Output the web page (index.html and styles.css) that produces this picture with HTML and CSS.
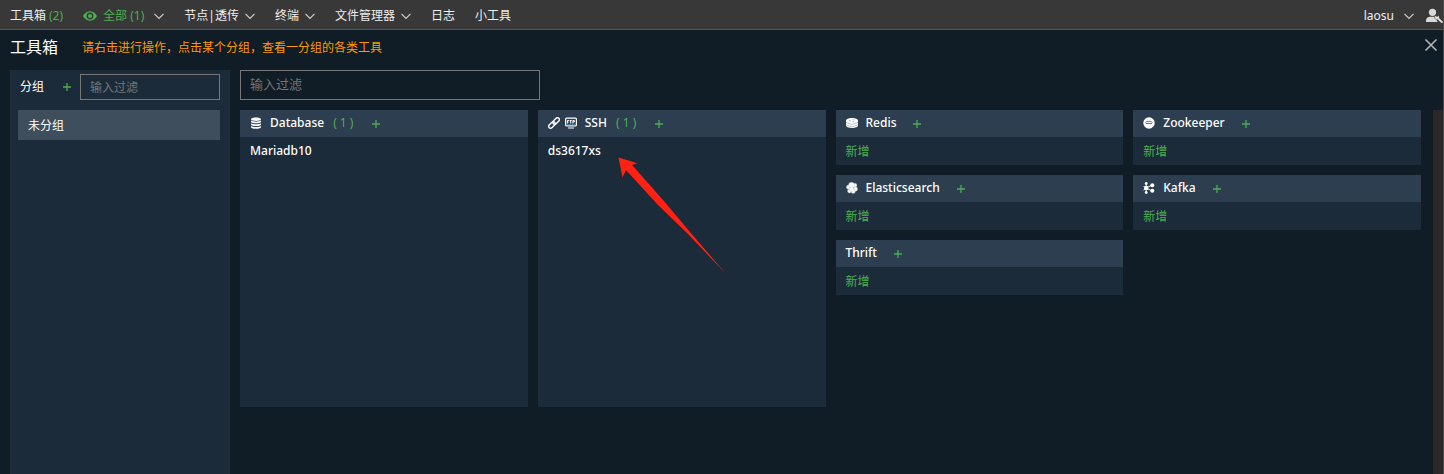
FILE: index.html
```html
<!DOCTYPE html>
<html lang="zh-CN">
<head>
<meta charset="utf-8">
<title>工具箱</title>
<link rel="stylesheet" href="styles.css">
</head>
<body>
<svg class="defs" aria-hidden="true">
  <symbol id="chevron" viewBox="0 0 10 10"><path d="M.5 2.800 5 7.300l4.500-4.500" fill="none" stroke="currentColor" stroke-width="1.200"/></symbol>
  <symbol id="plus" viewBox="0 0 10 10"><path d="M5 1v8M1 5h8" fill="none" stroke="currentColor" stroke-width="1.300"/></symbol>
</svg>
<nav class="topbar">
  <a class="nav-item nav-tight" href="#">工具箱<span class="green">(2)</span></a>
  <button class="nav-item green" type="button">
    <svg class="eye" viewBox="0 0 14 14"><path fill="currentColor" fill-rule="evenodd" d="M7 2.300C3.700 2.300 1.200 4.500 0 7c1.200 2.500 3.700 4.700 7 4.700s5.800-2.200 7-4.700c-1.200-2.500-3.700-4.700-7-4.700zM7 3.600a3.400 3.400 0 1 1 0 6.800 3.400 3.400 0 0 1 0-6.800zM7 5a2 2 0 1 0 0 4 2 2 0 0 0 0-4z"/></svg>
    <span>全部 (1)</span>
    <svg class="chevron chevron-far"><use href="#chevron"/></svg>
  </button>
  <button class="nav-item" type="button">节点|透传<svg class="chevron"><use href="#chevron"/></svg></button>
  <button class="nav-item" type="button">终端<svg class="chevron"><use href="#chevron"/></svg></button>
  <button class="nav-item" type="button">文件管理器<svg class="chevron"><use href="#chevron"/></svg></button>
  <a class="nav-item" href="#">日志</a>
  <a class="nav-item" href="#">小工具</a>
  <button class="nav-item account" type="button">laosu<svg class="chevron chevron-far"><use href="#chevron"/></svg></button>
  <button class="nav-item" type="button" aria-label="用户设置">
    <svg class="user" viewBox="0 0 18 16"><circle cx="7.500" cy="4.300" r="3.600" fill="currentColor"/><path fill="currentColor" d="M1 14v-1.500C1 10 3 8.800 5 8.800h4.200c.2 1.500 1 2.600 2.300 3l1.200 2.200z"/><path d="m12 9.500 4.800 4.500" stroke="currentColor" stroke-width="2" stroke-linecap="round"/><path d="M10.500 7.400a2.200 2.200 0 1 0 3 .2l-1 1.300-1.600-.5z" fill="currentColor"/></svg>
  </button>
</nav>
<div class="page">
  <header class="heading">
    <h1>工具箱</h1>
    <p>请右击进行操作，点击某个分组，查看一分组的各类工具</p>
    <button class="close" type="button" aria-label="关闭"><svg viewBox="0 0 14 14"><path d="m1.500 1.500 11 11m0-11-11 11" stroke="currentColor" stroke-width="1.600"/></svg></button>
  </header>
  <div class="workspace">
    <aside class="groups">
      <div class="groups-head">
        <label for="group-filter">分组</label>
        <button class="add" type="button" aria-label="新增分组"><svg><use href="#plus"/></svg></button>
        <input id="group-filter" type="text" placeholder="输入过滤">
      </div>
      <button class="group-row" type="button">未分组</button>
    </aside>
    <main class="tools">
      <input class="tool-filter" type="text" placeholder="输入过滤" aria-label="输入过滤">
      <div class="scroller">
        <div class="columns">
          <div class="column">
            <section class="card card-tall">
              <h2><svg class="icon" viewBox="0 0 12 12"><g fill="currentColor"><path d="M1 2.200C1-.1 11-.1 11 2.200S1 4.500 1 2.200zM1 3.600c2 1.400 8 1.400 10 0V5c-1 1.700-9 1.700-10 0zM1 6.300c2 1.400 8 1.400 10 0v1.500c-1 1.700-9 1.700-10 0zM1 9c2 1.400 8 1.400 10 0v1.200c-1 2-9 2-10 0z"/></g></svg><span class="name">Database</span><span class="count">( 1 )</span><button class="add" type="button" aria-label="新增 Database"><svg><use href="#plus"/></svg></button></h2>
              <a class="entry" href="#">Mariadb10</a>
            </section>
          </div>
          <div class="column">
            <section class="card card-tall">
              <h2><svg class="icon" viewBox="0 0 12 12"><g fill="none" stroke="currentColor" stroke-width="1.400"><rect x="4.300" y="2.100" width="7.600" height="3.800" rx="1.900" transform="rotate(-45 8.100 4)"/><rect x=".1" y="6.100" width="7.600" height="3.800" rx="1.900" transform="rotate(-45 3.900 8)"/></g></svg><svg class="icon ftp" viewBox="0 0 12 12"><rect x=".6" y="1.100" width="10.800" height="7.800" rx="1" fill="#2c3e50" stroke="currentColor" stroke-width="1.200"/><path d="M2.400 6.500v-3h1.500M2.400 5h1.200M4.700 3.500h2M5.700 3.500v3M7.900 6.500v-3h1.400v1.500H7.900" fill="none" stroke="currentColor"/><path d="M3 11h6" stroke="currentColor"/><path d="M1.500 8h9" stroke="#5fb4e8"/></svg><span class="name">SSH</span><span class="count">( 1 )</span><button class="add" type="button" aria-label="新增 SSH"><svg><use href="#plus"/></svg></button></h2>
              <a class="entry" href="#">ds3617xs</a>
              <svg class="pointer" viewBox="0 0 110 118"><path fill="#ff2213" d="M.5.500 19.500 6.300 14 8l31 35 27 32 36 42-38-40-30-29L8 13 4.500 20.500z"/></svg>
            </section>
          </div>
          <div class="column">
            <section class="card">
              <h2><svg class="icon" viewBox="0 0 12 12"><path fill="currentColor" d="M6 1c3.500 0 6 1.200 6 2.500v5C12 10 9.500 11 6 11S0 10 0 8.500v-5C0 2.200 2.500 1 6 1z"/><path d="m0 5.300 6 2.200 6-2.200M0 7.800 6 10l6-2.200M3 3.500l2 .5M6.500 2.500l2 .6M6 5l2-.8" fill="none" stroke="#8795a3" stroke-width=".6"/></svg><span class="name">Redis</span><button class="add" type="button" aria-label="新增 Redis"><svg><use href="#plus"/></svg></button></h2>
              <button class="entry green" type="button">新增</button>
            </section>
            <section class="card">
              <h2><svg class="icon" viewBox="0 0 12 12"><g fill="currentColor" stroke="#a9b3bd" stroke-width=".4"><circle cx="2.500" cy="5.200" r="2.100"/><circle cx="9.300" cy="7" r="2.300"/><circle cx="3.500" cy="8.900" r="2"/><circle cx="7.200" cy="9.400" r="2.100"/><circle cx="8.900" cy="3.300" r="2"/><circle cx="5.500" cy="3.300" r="3"/><circle cx="5.500" cy="7.200" r="2.200"/></g></svg><span class="name">Elasticsearch</span><button class="add" type="button" aria-label="新增 Elasticsearch"><svg><use href="#plus"/></svg></button></h2>
              <button class="entry green" type="button">新增</button>
            </section>
            <section class="card">
              <h2><span class="name">Thrift</span><button class="add" type="button" aria-label="新增 Thrift"><svg><use href="#plus"/></svg></button></h2>
              <button class="entry green" type="button">新增</button>
            </section>
          </div>
          <div class="column">
            <section class="card">
              <h2><svg class="icon" viewBox="0 0 12 12"><circle cx="6" cy="6" r="5.700" fill="currentColor"/><path d="M2.500 5.500c1-1.700 6-1.700 7 0M3 6.500h6" fill="none" stroke="#5b6a79" stroke-width=".9"/></svg><span class="name">Zookeeper</span><button class="add" type="button" aria-label="新增 Zookeeper"><svg><use href="#plus"/></svg></button></h2>
              <button class="entry green" type="button">新增</button>
            </section>
            <section class="card">
              <h2><svg class="icon" viewBox="0 0 12 12"><path d="M3.200 1.500v9M3.200 6l6-3M3.200 6l6 3M.5 4.500l2 1M.5 8l2-1" fill="none" stroke="currentColor" stroke-width=".9"/><g fill="currentColor"><circle cx="3.200" cy="6" r="2.300"/><circle cx="3.200" cy="1.500" r="1.400"/><circle cx="3.200" cy="10.500" r="1.400"/><circle cx="9.300" cy="3.300" r="2"/><circle cx="9.300" cy="8.700" r="2"/></g></svg><span class="name">Kafka</span><button class="add" type="button" aria-label="新增 Kafka"><svg><use href="#plus"/></svg></button></h2>
              <button class="entry green" type="button">新增</button>
            </section>
          </div>
        </div>
        <div class="track"></div>
      </div>
    </main>
  </div>
</div>
</body>
</html>
```
FILE: styles.css
```css
* { box-sizing: border-box; }
body {
  display: flex;
  flex-direction: column;
  height: 100vh;
  margin: 0;
  overflow: hidden;
  border-right: 1px solid #4a4a4a;
  background: #101c26;
  color: #fff;
  font: 12px/18px "Noto Sans", "Noto Sans CJK SC", sans-serif;
}
button, input { font: inherit; color: inherit; }
button { padding: 0; border: 0; background: none; }
a { color: inherit; text-decoration: none; }
svg { display: block; flex: none; }
.defs { position: absolute; width: 0; height: 0; }
.green { color: #4caf50; }

.topbar {
  display: flex;
  flex: none;
  align-items: center;
  gap: 20px;
  height: 30px;
  padding: 2px 0 0 10px;
  border-bottom: 1px solid #555;
  background: #383838;
  color: #eee;
}
.nav-item { display: flex; align-items: center; gap: 6px; white-space: nowrap; }
.nav-tight { gap: 3px; }
.eye { width: 14px; height: 14px; }
.chevron { width: 10px; height: 10px; color: #d0d0d0; }
.chevron-far { margin-left: 4px; }
.account { margin-left: auto; margin-right: -9px; }
.user { width: 18px; height: 16px; color: #d8d8d8; }

.page { display: flex; flex: 1; flex-direction: column; min-height: 0; }
.heading { display: flex; flex: none; align-items: center; height: 34px; padding: 0 5px 0 10px; }
h1 { margin: 0 24px 0 0; font-size: 16px; font-weight: 400; line-height: 24px; }
.heading p { margin: 0; padding-top: 2px; color: #ff9800; }
.close { margin-left: auto; margin-bottom: 4px; color: #b5b5b5; }
.close svg { width: 14px; height: 14px; }

.workspace { display: flex; flex: 1; gap: 10px; min-height: 0; padding: 6px 0 0 10px; }
.groups { width: 220px; flex: none; background: #1c2b39; }
.groups-head { display: flex; align-items: center; padding: 4px 10px; }
.groups-head label { margin-right: 18px; }
.groups-head input { flex: 1; min-width: 0; height: 26px; margin-left: 8px; }
input { padding: 0 9px; border: 1px solid #767676; border-radius: 0; background: transparent; outline: none; }
input::placeholder { color: #757575; opacity: 1; }
.group-row {
  display: block;
  width: calc(100% - 18px);
  height: 30px;
  margin: 6px 10px 0 8px;
  padding: 2px 10px 0;
  background: #3f4e5c;
  text-align: left;
}
.add { width: 10px; height: 10px; color: #4caf50; }
.add svg { width: 10px; height: 10px; }

.tools { display: flex; flex: 1; flex-direction: column; min-width: 0; }
.tool-filter { flex: none; width: 300px; height: 30px; padding-bottom: 2px; font-size: 13px; }
.scroller { display: flex; flex: 1; gap: 12px; min-height: 0; margin-top: 10px; }
.columns { display: grid; flex: 1; grid-template-columns: repeat(4, minmax(0, 1fr)); gap: 10px; align-items: start; }
.column { display: flex; flex-direction: column; gap: 10px; }
.card { position: relative; background: #1c2b39; font-weight: 500; }
.card-tall { min-height: 297px; }
.card h2 {
  display: flex;
  align-items: center;
  height: 27px;
  margin: 0;
  padding: 0 10px 2px;
  background: #2c3e50;
  font-size: 12px;
  font-weight: 500;
}
.icon { width: 12px; height: 12px; margin-right: 8px; }
.icon:has(+ .icon) { margin-right: 5px; }
.count { margin-left: 9px; color: #4caf50; font-weight: 400; }
.card .add { margin: 2px 0 0 16px; }
.count + .add { margin-left: 18px; }
.card .count + .add { margin-left: 18px; }
.entry { display: block; padding: 5px 10px; }
.entry.green { padding: 6px 10px 4px; font-weight: 400; }
.pointer { position: absolute; top: 47px; left: 80px; width: 110px; height: 118px; }
.track { width: 10px; background: #2a2828; }
```
